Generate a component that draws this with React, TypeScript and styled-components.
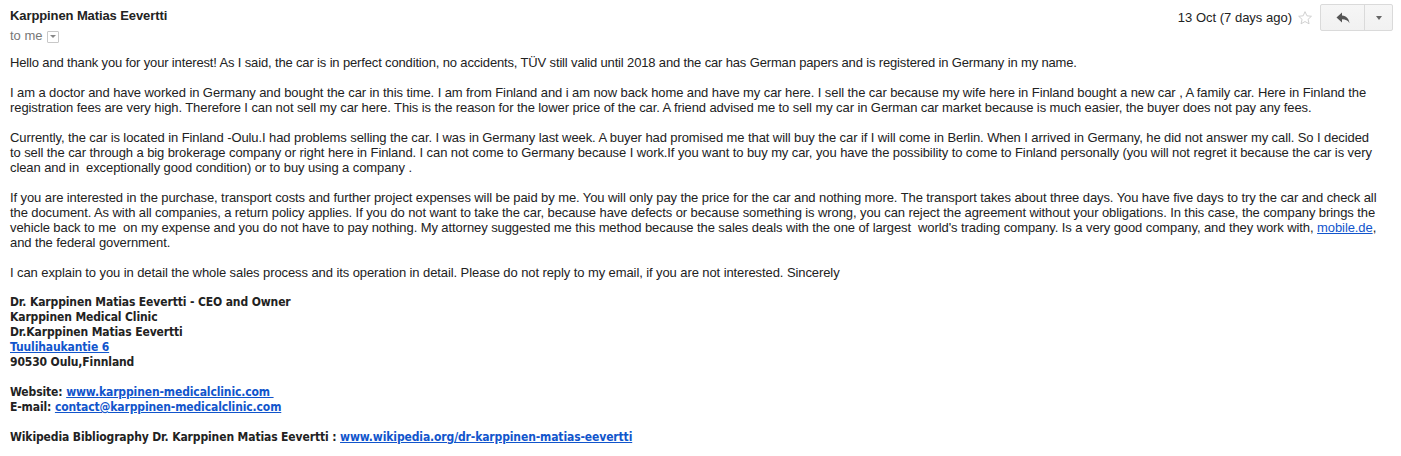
import React from "react";
import styled, { createGlobalStyle } from "styled-components";

const Global = createGlobalStyle`
  html, body {
    margin: 0;
    padding: 0;
    background: #fff;
  }
  body {
    font-family: "Liberation Sans", Arial, sans-serif;
    font-size: 13px;
    color: #222;
  }
`;

const Message = styled.div`
  width: 1401px;
  height: 456px;
  overflow: hidden;
  box-sizing: border-box;
  padding: 0 8px 0 10px;
`;

const Header = styled.div`
  display: flex;
  justify-content: space-between;
  align-items: flex-start;
  height: 46px;
`;

const Sender = styled.div`
  display: flex;
  flex-direction: column;
  padding-top: 8px;
`;

const SenderName = styled.span`
  font-weight: bold;
  font-size: 13px;
  line-height: 16px;
  color: #222;
  letter-spacing: -0.1px;
`;

const Recipients = styled.div`
  display: flex;
  align-items: center;
  gap: 4px;
  margin-top: 4px;
  color: #777;
  font-size: 13px;
  line-height: 16px;
`;

const TinyToggle = styled.span`
  display: inline-flex;
  align-items: center;
  justify-content: center;
  width: 10px;
  height: 10px;
  border: 1px solid #c8c8c8;
  border-radius: 1px;
  margin-top: 1px;
  &::after {
    content: "";
    border-left: 3px solid transparent;
    border-right: 3px solid transparent;
    border-top: 3px solid #888;
  }
`;

const Meta = styled.div`
  display: flex;
  align-items: center;
  padding-top: 4px;
`;

const DateText = styled.span`
  font-size: 13px;
  color: #222;
  margin-right: 5px;
`;

const Star = styled.svg`
  width: 16px;
  height: 16px;
  margin-right: 7px;
`;

const ButtonGroup = styled.div`
  display: flex;
  height: 27px;
  border: 1px solid #dadada;
  border-radius: 2px;
  background: linear-gradient(#f6f6f6, #f1f1f1);
  box-sizing: border-box;
`;

const GroupButton = styled.div<{ $w: number; $divider?: boolean }>`
  width: ${(p) => p.$w}px;
  display: flex;
  align-items: center;
  justify-content: center;
  border-right: ${(p) => (p.$divider ? "1px solid #dadada" : "none")};
`;

const Caret = styled.span`
  border-left: 3px solid transparent;
  border-right: 3px solid transparent;
  border-top: 4px solid #666;
`;

const Body = styled.div`
  margin-top: 9px;
`;

const Para = styled.p<{ $spacing?: number }>`
  margin: 0 0 15px;
  line-height: 15px;
  white-space: nowrap;
  letter-spacing: ${(p) => (p.$spacing ?? -0.09)}px;
`;

const Link = styled.a`
  color: #15c;
  text-decoration: underline;
`;

const Signature = styled.div`
  font-family: "DejaVu Sans", Verdana, sans-serif;
  font-stretch: semi-condensed;
  font-size: 12px;
  font-weight: bold;
  color: #222;
  line-height: 15px;
  letter-spacing: -0.12px;
  white-space: nowrap;
`;

const SigBlock = styled.div`
  margin-bottom: 15px;
`;

const SigLine = styled.div``;

const App: React.FC = () => {
  return (
    <>
      <Global />
      <Message>
        <Header>
          <Sender>
            <SenderName>Karppinen Matias Eevertti</SenderName>
            <Recipients>
              to me <TinyToggle />
            </Recipients>
          </Sender>
          <Meta>
            <DateText>13 Oct (7 days ago)</DateText>
            <Star viewBox="0 0 24 24">
              <path
                d="M12 2.5l2.9 6.2 6.8.7-5.1 4.6 1.5 6.7L12 17.3l-5.9 3.4 1.5-6.7-5.1-4.6 6.8-.7z"
                fill="none"
                stroke="#c9c9c9"
                strokeWidth="1.3"
                strokeLinejoin="round"
              />
            </Star>
            <ButtonGroup>
              <GroupButton $w={43} $divider>
                <svg width="14" height="12" viewBox="0 0 14 12">
                  <path d="M6 0.5L0.5 5.5 6 10.5V7.3c3.6 0 5.9 1 7.5 4C13 7 10.6 4 6 3.6z" fill="#555" />
                </svg>
              </GroupButton>
              <GroupButton $w={27}>
                <Caret />
              </GroupButton>
            </ButtonGroup>
          </Meta>
        </Header>
        <Body>
          <Para $spacing={-0.15}>
            Hello and thank you for your interest! As I said, the car is in perfect condition, no accidents, TÜV still valid until 2018 and the car has German papers and is registered in Germany in my name.
          </Para>
          <Para>
            I am a doctor and have worked in Germany and bought the car in this time. I am from Finland and i am now back home and have my car here. I sell the car because my wife here in Finland bought a new car , A family car. Here in Finland the
            <br />
            registration fees are very high. Therefore I can not sell my car here. This is the reason for the lower price of the car. A friend advised me to sell my car in German car market because is much easier, the buyer does not pay any fees.
          </Para>
          <Para>
            Currently, the car is located in Finland -Oulu.I had problems selling the car. I was in Germany last week. A buyer had promised me that will buy the car if I will come in Berlin. When I arrived in Germany, he did not answer my call. So I decided
            <br />
            to sell the car through a big brokerage company or right here in Finland. I can not come to Germany because I work.If you want to buy my car, you have the possibility to come to Finland personally (you will not regret it because the car is very
            <br />
            clean and in&nbsp; exceptionally good condition) or to buy using a company .
          </Para>
          <Para>
            If you are interested in the purchase, transport costs and further project expenses will be paid by me. You will only pay the price for the car and nothing more. The transport takes about three days. You have five days to try the car and check all
            <br />
            the document. As with all companies, a return policy applies. If you do not want to take the car, because have defects or because something is wrong, you can reject the agreement without your obligations. In this case, the company brings the
            <br />
            vehicle back to me&nbsp; on my expense and you do not have to pay nothing. My attorney suggested me this method because the sales deals with the one of largest&nbsp; world's trading company. Is a very good company, and they work with, <Link href="#">mobile.de</Link>,
            <br />
            and the federal government.
          </Para>
          <Para>
            I can explain to you in detail the whole sales process and its operation in detail. Please do not reply to my email, if you are not interested. Sincerely
          </Para>
          <Signature>
            <SigBlock>
              <SigLine>Dr. Karppinen Matias Eevertti - CEO and Owner</SigLine>
              <SigLine>Karppinen Medical Clinic</SigLine>
              <SigLine>Dr.Karppinen Matias Eevertti</SigLine>
              <SigLine>
                <Link href="#">Tuulihaukantie 6</Link>
              </SigLine>
              <SigLine>90530 Oulu,Finnland</SigLine>
            </SigBlock>
            <SigBlock>
              <SigLine>
                Website: <Link href="#">www.karppinen-medicalclinic.com&nbsp;</Link>
              </SigLine>
              <SigLine>
                E-mail: <Link href="#">contact@karppinen-medicalclinic.com</Link>
              </SigLine>
            </SigBlock>
            <SigBlock>
              <SigLine>
                Wikipedia Bibliography Dr. Karppinen Matias Eevertti : <Link href="#">www.wikipedia.org/dr-karppinen-matias-eevertti</Link>
              </SigLine>
            </SigBlock>
          </Signature>
        </Body>
      </Message>
    </>
  );
};

export default App;
